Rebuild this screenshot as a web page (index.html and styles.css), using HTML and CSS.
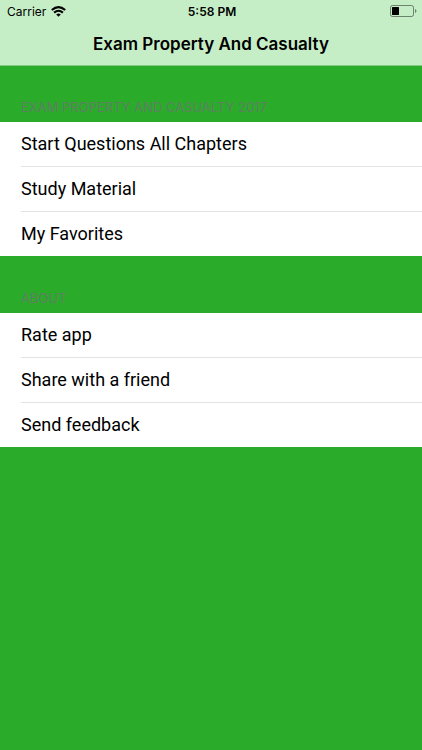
FILE: index.html
```html
<!DOCTYPE html>
<html lang="en">
<head>
<meta charset="utf-8">
<meta name="viewport" content="width=device-width, initial-scale=1">
<title>Exam Property And Casualty</title>
<link rel="stylesheet" href="styles.css">
</head>
<body>
  <header>
    <div class="status">
      <div class="carrier">
        <span>Carrier</span>
        <svg width="15" height="11" viewBox="0 0 15 11">
          <path d="M0.800 4 Q7.500 -1.600 14.200 4" fill="none" stroke="#000" stroke-width="2.200"/>
          <path d="M3.100 6.600 Q7.500 2.900 11.900 6.600" fill="none" stroke="#000" stroke-width="2.100"/>
          <path d="M7.500 10.800 L5.200 8.400 Q7.500 6.600 9.800 8.400 Z"/>
        </svg>
      </div>
      <span class="time">5:58 PM</span>
      <div class="battery">
        <svg width="27" height="12" viewBox="0 0 27 12">
          <rect x="0.500" y="0.500" width="23" height="11" rx="2" fill="none" stroke="#000" stroke-opacity="0.450"/>
          <rect x="2" y="2" width="7" height="8" rx="0.500"/>
          <path d="M25 4 Q26.500 4.500 26.500 6 Q26.500 7.500 25 8 Z" fill-opacity="0.450"/>
        </svg>
      </div>
    </div>
    <h1>Exam Property And Casualty</h1>
  </header>

  <main>
    <section>
      <h2>EXAM PROPERTY AND CASUALTY 2017</h2>
      <ul>
        <li><a href="#">Start Questions All Chapters</a></li>
        <li><a href="#">Study Material</a></li>
        <li><a href="#">My Favorites</a></li>
      </ul>
    </section>
    <section>
      <h2>ABOUT</h2>
      <ul>
        <li><a href="#">Rate app</a></li>
        <li><a href="#">Share with a friend</a></li>
        <li><a href="#">Send feedback</a></li>
      </ul>
    </section>
  </main>
</body>
</html>
```
FILE: styles.css
```css
* {
  margin: 0;
  padding: 0;
  box-sizing: border-box;
}

body {
  background: #2aac2a;
  color: #000;
  font-family: Inter, "Liberation Sans", sans-serif;
}

header {
  background: #c6eec6;
  border-bottom: 1px solid #86c886;
}

.status {
  display: grid;
  grid-template-columns: 1fr auto 1fr;
  align-items: center;
  height: 22px;
  padding: 0 5px 0 7px;
  font-size: 12px;
}

.carrier {
  display: flex;
  align-items: center;
  gap: 5px;
}

.time {
  font-weight: 600;
}

.battery {
  display: flex;
  justify-content: flex-end;
}

h1 {
  padding-top: 1px;
  font-size: 17px;
  font-weight: 600;
  line-height: 42px;
  text-align: center;
}

h2 {
  padding: 32px 21px 5px;
  color: #5f7f63;
  font-size: 13px;
  font-weight: 400;
  line-height: 20px;
}

section:first-child h2 {
  padding-top: 31px;
}

ul {
  background: #fff;
  list-style: none;
}

li {
  padding-left: 21px;
}

li a {
  display: block;
  height: 45px;
  border-bottom: 1px solid #e3e3e5;
  color: #000;
  font-family: Roboto, "Liberation Sans", sans-serif;
  font-size: 18px;
  line-height: 44px;
  text-decoration: none;
}

li:last-child a {
  height: 44px;
  border-bottom: 0;
}
```
